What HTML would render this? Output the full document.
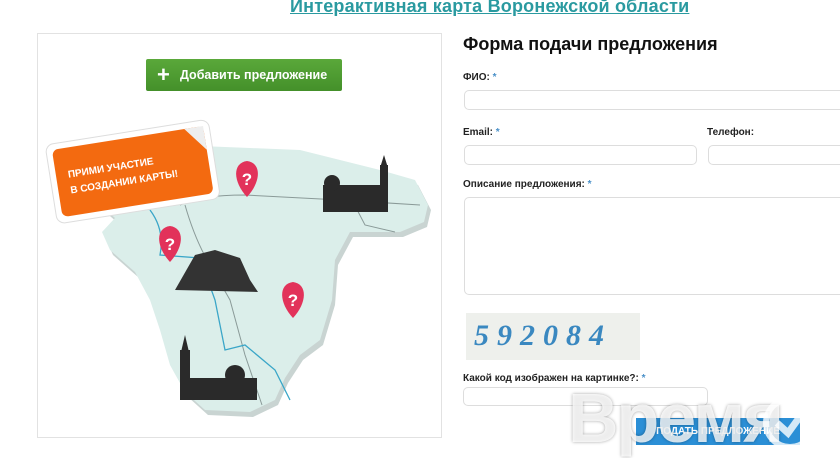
<!DOCTYPE html>
<html><head><meta charset="utf-8"><style>
*{margin:0;padding:0;box-sizing:border-box}
body{width:840px;height:450px;background:#fff;position:relative;overflow:hidden;font-family:"Liberation Sans","DejaVu Sans",sans-serif}
.a{position:absolute}
.title{left:290px;top:-4px;font-size:18px;font-weight:bold;color:#2a9aa0;text-decoration:underline;white-space:nowrap;letter-spacing:.2px}
.panel{left:37px;top:33px;width:405px;height:405px;border:1px solid #e2e2e2}
.btn{left:146px;top:59px;width:196px;height:32px;background:linear-gradient(#5aa83a,#44902a);border-radius:2px;color:#fff;font-size:12.5px;font-weight:bold;line-height:32px;padding-left:34px}
.btn b{position:absolute;left:11px;top:0;font-size:22px}
.lbl{font-size:10px;font-weight:bold;color:#222}
.lbl i{color:#4a90c8;font-style:normal}
.inp{border:1px solid #ddd;border-radius:5px;background:#fff}
h2{left:463px;top:34px;font-size:18px;font-weight:bold;color:#111;white-space:nowrap}
.sub{left:636px;top:418px;width:164px;height:27px;background:#2b8fd6;color:#fff;font-size:10px;font-weight:bold;text-align:center;line-height:27px}
.wm{left:568px;top:378px;font-size:70px;font-weight:bold;color:rgba(255,255,255,.8);letter-spacing:-2px;text-shadow:0 0 3px rgba(0,0,0,.35)}
</style></head><body>
<div class="a title">Интерактивная карта Воронежской области</div>
<div class="a panel"></div>
<svg class="a" style="left:37px;top:33px" width="405" height="405" viewBox="37 33 405 405">
<polygon points="108,160 150,150 200,146 250,148 300,150 340,160 380,170 415,180 428,205 424,222 400,232 350,232 335,260 332,300 320,340 300,355 285,378 275,400 250,412 205,410 185,392 170,365 160,330 150,300 135,272 110,250 102,232 115,218 100,205 104,180" fill="#c9d4d2" transform="translate(3,5)"/>
<polygon points="108,160 150,150 200,146 250,148 300,150 340,160 380,170 415,180 428,205 424,222 400,232 350,232 335,260 332,300 320,340 300,355 285,378 275,400 250,412 205,410 185,392 170,365 160,330 150,300 135,272 110,250 102,232 115,218 100,205 104,180" fill="#dbeeea"/>
<path d="M180,205 Q200,195 245,195 L340,200 L420,205" stroke="#8a9a98" fill="none"/>
<path d="M185,205 Q195,240 210,265 L230,300 L245,355 L262,405" stroke="#8a9a98" fill="none"/>
<path d="M150,210 Q165,230 160,255 L200,258 L215,300 L225,350 L245,345 L275,370 L290,400" stroke="#3aa6c8" fill="none" stroke-width="1.3"/>
<path d="M352,200 L365,225 L395,232" stroke="#8a9a98" fill="none"/>
<polygon points="175,290 195,255 215,250 240,258 250,280 258,292" fill="#333"/>
<g fill="#2a2a2a"><rect x="323" y="185" width="65" height="27"/><rect x="380" y="165" width="8" height="25"/><polygon points="384,155 380,168 388,168"/><circle cx="332" cy="183" r="8"/>
<rect x="180" y="350" width="10" height="50"/><polygon points="185,335 181,352 189,352"/><rect x="180" y="378" width="77" height="22"/><circle cx="235" cy="375" r="10"/></g>
<g fill="#e2325a"><path d="M247,197 C233,182 232,163 247,161 C262,163 261,182 247,197Z"/><path d="M170,262 C156,247 155,228 170,226 C185,228 184,247 170,262Z"/><path d="M293,318 C279,303 278,284 293,282 C308,284 307,303 293,318Z"/></g>
<g fill="#fff" font-size="17" font-weight="bold" font-family="Liberation Sans" text-anchor="middle"><text x="247" y="185">?</text><text x="170" y="250">?</text><text x="293" y="306">?</text></g>
<g transform="rotate(-9 130 170)"><rect x="50" y="132" width="165" height="80" rx="8" fill="#fff" stroke="#ddd"/><rect x="56" y="138" width="153" height="68" rx="6" fill="#f36a10"/><polygon points="190,138 209,138 209,162" fill="#eee"/>
<text x="68" y="168" fill="#fff" font-size="10" font-weight="bold" font-family="Liberation Sans">ПРИМИ УЧАСТИЕ</text><text x="68" y="184" fill="#fff" font-size="10" font-weight="bold" font-family="Liberation Sans">В СОЗДАНИИ КАРТЫ!</text></g>
</svg>
<div class="a btn"><b>+</b>Добавить предложение</div>
<h2 class="a">Форма подачи предложения</h2>
<div class="a lbl" style="left:463px;top:72px">ФИО: <i>*</i></div>
<div class="a inp" style="left:464px;top:90px;width:390px;height:20px"></div>
<div class="a lbl" style="left:463px;top:127px">Email: <i>*</i></div>
<div class="a lbl" style="left:707px;top:127px">Телефон:</div>
<div class="a inp" style="left:464px;top:145px;width:233px;height:20px"></div>
<div class="a inp" style="left:708px;top:145px;width:140px;height:20px"></div>
<div class="a lbl" style="left:463px;top:179px">Описание предложения: <i>*</i></div>
<div class="a inp" style="left:464px;top:197px;width:390px;height:98px"></div>
<div class="a" style="left:466px;top:313px;width:174px;height:47px;background:#eef0ec;color:#3a88c0;font:italic bold 30px 'Liberation Serif',serif;letter-spacing:8px;padding:6px 0 0 8px">592084</div>
<div class="a lbl" style="left:463px;top:373px">Какой код изображен на картинке?: <i>*</i></div>
<div class="a inp" style="left:463px;top:387px;width:245px;height:19px"></div>
<div class="a sub">ПОДАТЬ ПРЕДЛОЖЕНИЕ</div>
<div class="a wm">Время</div>
<svg class="a" style="left:762px;top:395px" width="60" height="60"><circle cx="28" cy="28" r="24" fill="none" stroke="rgba(255,255,255,.8)" stroke-width="6"/><path d="M15,28 L26,38 L42,16" stroke="rgba(255,255,255,.8)" stroke-width="7" fill="none"/></svg>
</body></html>
